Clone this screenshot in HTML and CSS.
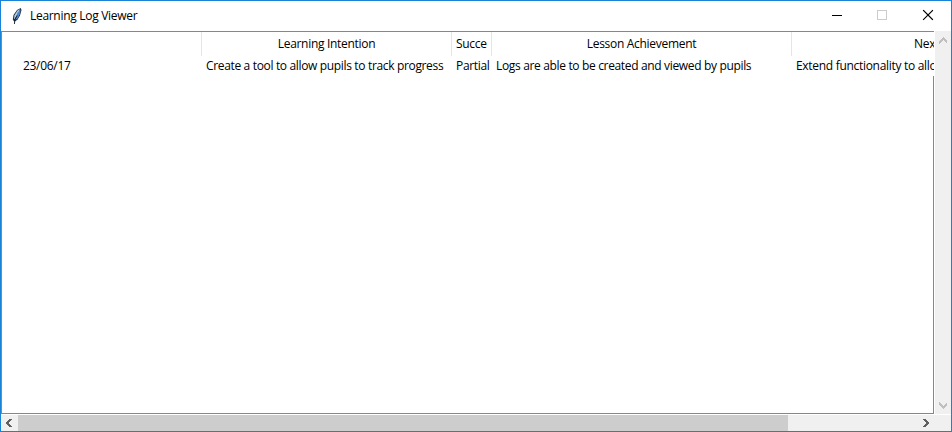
FILE: index.html
```html
<!DOCTYPE html>
<html lang="en">
<head>
<meta charset="utf-8">
<title>Learning Log Viewer</title>
<link rel="stylesheet" href="styles.css">
</head>
<body>
<div class="window">
  <header class="titlebar">
    <svg class="feather" width="12" height="18" viewBox="0 0 12 18">
      <path d="M9.8 1 L6 3 L2.5 8 L1.8 12.5 L3.2 14.8 L6.5 12.8 L9 8.5 L10.5 3 Z" fill="#1d2a3c"/>
      <path d="M9 2 L6.3 3.8 L3.5 8.2 L2.8 12.8 L4.5 10.5 L8 4.7 Z" fill="#b4cde6"/>
      <path d="M9.8 2.4 L6.8 5.2 L3.8 12.8 L6.4 11.8 L8.6 7.8 Z" fill="#4d87cb"/>
      <path d="M6.2 8.5 L4 12.5 L3.4 17" fill="none" stroke="#10151c" stroke-width=".9"/>
    </svg>
    <h1 class="title">Learning Log Viewer</h1>
    <div class="controls">
      <svg width="46" height="30" shape-rendering="crispEdges"><path d="M18 14.5h10" stroke="#000"/></svg>
      <svg width="46" height="30" shape-rendering="crispEdges"><rect x="17.5" y="9.5" width="9" height="9" fill="none" stroke="#ccc"/></svg>
      <svg width="46" height="30"><path d="M17.5 9.5l9 9M26.5 9.5l-9 9" stroke="#000" stroke-width="1.1" stroke-linecap="square"/></svg>
    </div>
  </header>
  <main class="body">
    <section class="tree">
      <div class="row head">
        <div class="cell"></div>
        <div class="cell"><span>Learning Intention</span></div>
        <div class="cell clip"><span>Succe</span></div>
        <div class="cell"><span>Lesson Achievement</span></div>
        <div class="cell"><span>Nex</span></div>
      </div>
      <div class="row data">
        <div class="cell"><span>23/06/17</span></div>
        <div class="cell"><span class="tight">Create a tool to allow pupils to track progress</span></div>
        <div class="cell"><span class="tight">Partial</span></div>
        <div class="cell"><span class="tight">Logs are able to be created and viewed by pupils</span></div>
        <div class="cell"><span>Extend functionality to allo</span></div>
      </div>
      <div class="empty"></div>
    </section>
    <div class="vscroll">
      <svg width="16" height="17" shape-rendering="crispEdges"><path d="M4 10l4-4 4 4v3l-4-4-4 4z" fill="#bfbfbf"/></svg>
      <svg width="16" height="17" shape-rendering="crispEdges"><path d="M4 5l4 4 4-4v3l-4 4-4-4z" fill="#bfbfbf"/></svg>
    </div>
  </main>
  <footer class="hscroll">
    <svg width="17" height="16" shape-rendering="crispEdges"><path d="M11 4l-4 4 4 4h-3l-4-4 4-4z" fill="#606060"/></svg>
    <div class="thumb"></div>
    <svg class="right" width="17" height="16" shape-rendering="crispEdges"><path d="M5 4l4 4-4 4h3l4-4-4-4z" fill="#606060"/></svg>
    <div class="corner"></div>
  </footer>
</div>
</body>
</html>
```
FILE: styles.css
```css
* { box-sizing: border-box; }
body { margin: 0; overflow: hidden; background: #fff; color: #000; font: 12px/16px "Open Sans", "Noto Sans", sans-serif; }
svg { display: block; flex: none; }
.window { width: 952px; height: 432px; border: 1px solid #1883d7; display: flex; flex-direction: column; }
.titlebar { height: 30px; flex: none; display: flex; align-items: center; background: #fff; }
.feather { margin: 0 7px 0 10px; }
.title { margin: 0; font-size: 12px; font-weight: 400; letter-spacing: -0.3px; }
.controls { margin-left: auto; display: flex; margin-right: -1px; }
.body { flex: 1; min-height: 0; display: flex; }
.tree { width: 933px; margin-right: 1px; display: flex; flex-direction: column; border: solid #828790; border-width: 1px 0 1px 1px; }
.row { display: grid; grid-template-columns: 200px 250px 40px 300px 142px; flex: none; }
.cell { overflow: hidden; white-space: nowrap; min-width: 0; }
.head { height: 24px; }
.head .cell { border-right: 1px solid #e5e5e5; line-height: 24px; height: 24px; text-align: center; }
.head .cell:last-child { border-right: 0; text-align: left; padding-left: 122px; }
.head .clip { border-right: 0; text-align: left; margin: 0 0 0 4px; }
.head .clip + .cell { border-left: 1px solid #e5e5e5; margin-left: -1px; }
.data { height: 20px; line-height: 20px; }
.data .cell { padding-left: 4px; }
.data .cell:first-child { padding-left: 21px; }
.empty { flex: 1; border-right: 1px solid #828790; }
.row span { letter-spacing: -0.3px; }
.row .tight { letter-spacing: -0.34px; }
.vscroll { width: 16px; background: #f0f0f0; display: flex; flex-direction: column; justify-content: space-between; }
.hscroll { height: 17px; flex: none; display: flex; background: #f0f0f0; border-top: 1px solid #fff; }
.thumb { width: 770px; background: #cdcdcd; }
.right { margin-left: auto; }
.corner { width: 17px; }
```
